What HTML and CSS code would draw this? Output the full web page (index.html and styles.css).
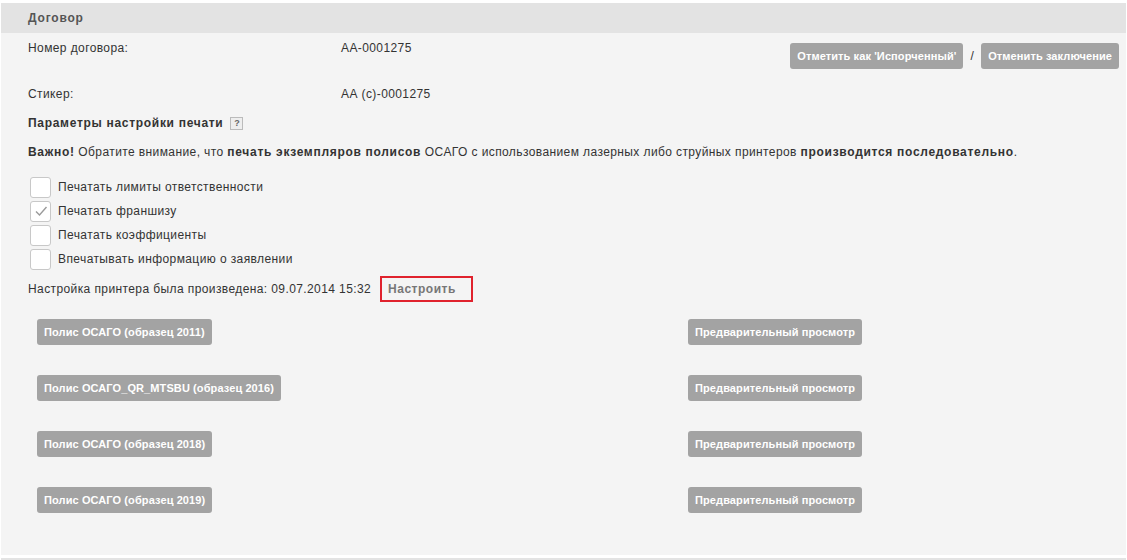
FILE: index.html
```html
<!DOCTYPE html>
<html lang="ru">
<head>
<meta charset="utf-8">
<link rel="stylesheet" href="styles.css">
</head>
<body>
<div class="panel">
  <div class="panel-head">Договор</div>
  <div class="panel-body">
    <div class="row row-number">
      <div class="label">Номер договора:</div>
      <div class="value">АА-0001275</div>
      <div class="actions">
        <span class="btn">Отметить как 'Испорченный'</span>
        <span class="sep">/</span>
        <span class="btn">Отменить заключение</span>
      </div>
    </div>
    <div class="row row-sticker">
      <div class="label">Стикер:</div>
      <div class="value">АА (с)-0001275</div>
    </div>
    <div class="section-title">Параметры настройки печати <span class="help">?</span></div>
    <p class="note"><b>Важно!</b> Обратите внимание, что <b>печать экземпляров полисов</b> ОСАГО с использованием лазерных либо струйных принтеров <b>производится последовательно</b>.</p>
    <div class="checks">
      <label class="check"><span class="box"></span>Печатать лимиты ответственности</label>
      <label class="check"><span class="box"><svg width="14" height="14" viewBox="0 0 14 14"><path d="M2 7.5 L5.5 11 L12.5 3" fill="none" stroke="#9a9a9a" stroke-width="1.4"/></svg></span>Печатать франшизу</label>
      <label class="check"><span class="box"></span>Печатать коэффициенты</label>
      <label class="check"><span class="box"></span>Впечатывать информацию о заявлении</label>
    </div>
    <div class="printer">Настройка принтера была произведена: 09.07.2014 15:32 <span class="setup">Настроить</span></div>
    <div class="policies">
      <div class="policy"><span class="btn">Полис ОСАГО (образец 2011)</span><span class="btn">Предварительный просмотр</span></div>
      <div class="policy"><span class="btn">Полис ОСАГО_QR_MTSBU (образец 2016)</span><span class="btn">Предварительный просмотр</span></div>
      <div class="policy"><span class="btn">Полис ОСАГО (образец 2018)</span><span class="btn">Предварительный просмотр</span></div>
      <div class="policy"><span class="btn">Полис ОСАГО (образец 2019)</span><span class="btn">Предварительный просмотр</span></div>
    </div>
  </div>
</div>
<div class="bottom-line"></div>
</body>
</html>
```

FILE: styles.css
```css
* { box-sizing: border-box; }
html, body { margin: 0; padding: 0; background: #fff; }
body {
  font-family: "Liberation Sans", Arial, sans-serif;
  font-size: 12px;
  color: #333;
  letter-spacing: 0.4px;
  padding: 3px 1px 0 1px;
}
b { letter-spacing: 0.7px; }
.panel { background: #f4f4f4; height: 552px; }
.panel-head {
  background: #e3e3e3;
  height: 30px;
  line-height: 30px;
  padding-left: 27px;
  font-weight: bold;
  color: #555;
  letter-spacing: 0.8px;
}
.panel-body { padding: 0 7px 0 27px; }
.row { display: flex; align-items: center; }
.row-number { height: 40px; }
.row-sticker { height: 30px; margin-top: 6px; }
.label { width: 313px; }
.value { flex: 1; }
.actions { display: flex; align-items: center; }
.row-number .label, .row-number .value { align-self: flex-start; padding-top: 8px; }
.row-number .actions { margin-top: 10px; align-self: flex-start; }
.btn {
  display: inline-block;
  background: #a3a3a3;
  color: #fff;
  font-weight: bold;
  font-size: 11px;
  letter-spacing: 0.1px;
  height: 26px;
  line-height: 26px;
  padding: 0 7px;
  border-radius: 3px;
  white-space: nowrap;
}
.sep { margin: 0 7px; color: #333; font-size: 12px; }
.section-title {
  font-weight: bold;
  letter-spacing: 0.7px;
  margin-top: 4px;
  height: 20px;
  display: flex;
  align-items: center;
}
.help {
  display: inline-flex;
  align-items: center;
  justify-content: center;
  width: 13px; height: 13px;
  border: 1px solid #bbb;
  background: #eee;
  color: #666;
  font-size: 9px;
  margin-left: 7px;
  letter-spacing: 0;
}
.note { margin: 9px 0 0 0; height: 20px; line-height: 20px; }
.checks { margin-top: 15px; display: flex; flex-direction: column; gap: 4px; }
.check { display: flex; align-items: center; height: 20px; }
.box {
  width: 21px; height: 21px;
  border: 1px solid #c8c8c8;
  border-radius: 3px;
  background: #fff;
  margin: 0 7px 0 2px;
  display: inline-flex;
  align-items: center;
  justify-content: center;
}
.printer { margin-top: 7px; display: flex; align-items: center; height: 26px; }
.setup {
  display: inline-flex;
  align-items: center;
  height: 26px;
  width: 93px;
  border: 2px solid #e0222d;
  padding-left: 6px;
  margin-left: 9px;
  font-weight: bold;
  color: #777;
  letter-spacing: 0.5px;
}
.policies { padding-left: 9px; margin-top: 17px; display: flex; flex-direction: column; gap: 30px; }
.policy { display: grid; grid-template-columns: 651px auto; justify-content: start; }
.policy .btn { justify-self: start; }
.bottom-line { height: 2px; background: #e3e3e3; margin-top: 3px; }
```
